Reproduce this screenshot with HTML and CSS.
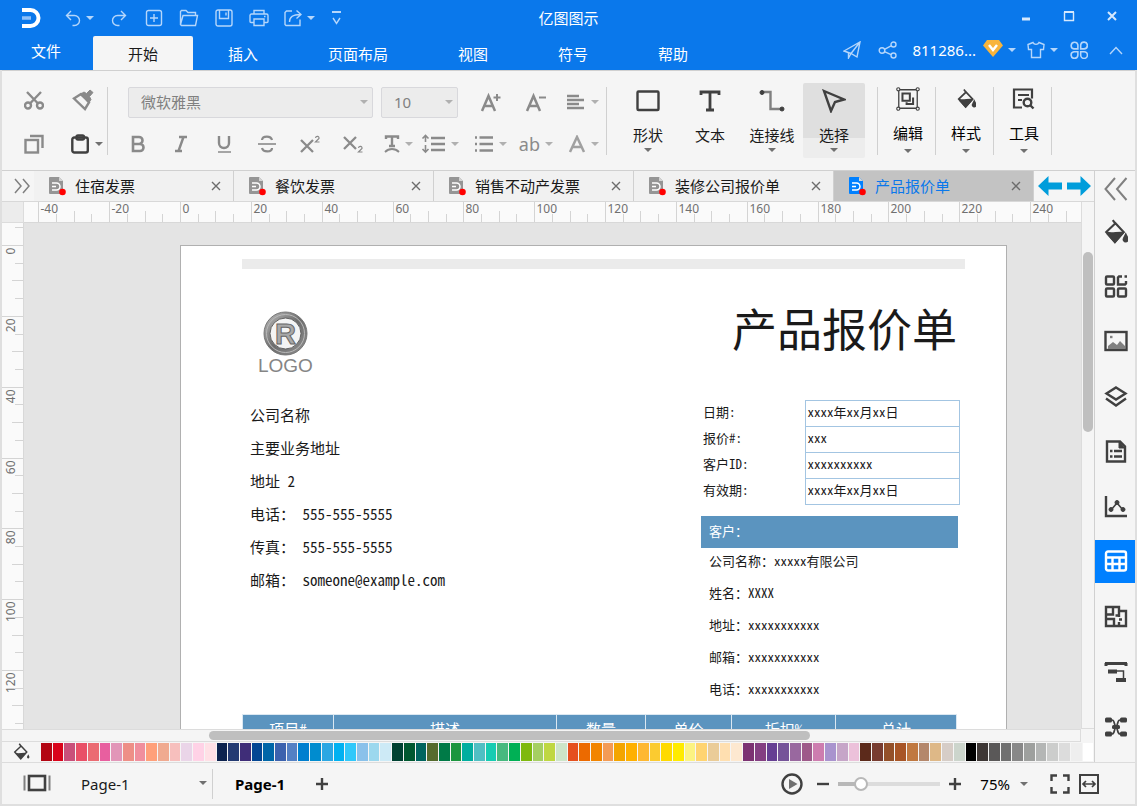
FILE: index.html
```html
<!DOCTYPE html>
<html lang="zh-CN">

	<head>
		<meta charset="UTF-8">
		<meta name="viewport" content="width=device-width, initial-scale=1">
		<title>亿图图示</title>
		<link rel="stylesheet" href="styles.css">
	</head>

	<body>
		<header class="header">
			<div class="titlebar">
				<div class="quick">
					<svg class="brand" width="22" height="22" viewBox="0 0 22 22" fill="none" stroke="#fff" stroke-width="4"><path d="M2 3h8.500a7.800 7.800 0 0 1 0 16H2"/><path d="M2 11h9" stroke="#8fc0f8" stroke-width="3.500"/></svg>
					<button class="undo" aria-label="撤销"><svg width="16" height="18" viewBox="0 0 16 18"><path d="M6 2L1.500 6.500 6 11M1.500 6.500H9.500a5 5 0 0 1 0 10H7.500"/></svg><i class="caret"></i></button>
					<button aria-label="重做"><svg width="16" height="18" viewBox="0 0 16 18"><path d="M10 2l4.500 4.500L10 11M14.500 6.500H6.500a5 5 0 0 0 0 10H8.500"/></svg></button>
					<button aria-label="新建"><svg width="18" height="18" viewBox="0 0 18 18"><rect x="1.500" y="1.500" width="15" height="15" rx="2"/><path d="M9 5v8M5 9h8"/></svg></button>
					<button aria-label="打开"><svg width="20" height="18" viewBox="0 0 20 18"><path d="M1.500 15.500v-13l1-1H7l2 2h7.500v3M1.500 15.500L4 6.500h14.500l-2 10H2.500z"/></svg></button>
					<button aria-label="保存"><svg width="18" height="18" viewBox="0 0 18 18"><rect x="1" y="1" width="16" height="16" rx="2"/><path d="M4.500 1v8.500h9V1M11 3.500v3"/></svg></button>
					<button aria-label="打印"><svg width="20" height="18" viewBox="0 0 20 18"><path d="M5 5V1.500h10V5M5 13.500H2a1 1 0 0 1-1-1V6.500A1.500 1.500 0 0 1 2.500 5h15A1.500 1.500 0 0 1 19 6.500v6a1 1 0 0 1-1 1h-3M5 10h10v6.500H5zM15 7.500h1.500"/></svg></button>
					<button class="export" aria-label="导出"><svg width="18" height="18" viewBox="0 0 18 18"><path d="M8 2H2.500L1 3.500v12l1 1h14v-6M5.500 13c0-5 3-7.500 11-7.500M12.500 1.500l4.500 4-4.500 4"/></svg><i class="caret"></i></button>
					<button aria-label="自定义"><svg width="12" height="16" viewBox="0 0 12 16"><path d="M2 2h9" stroke-width="2"/><path d="M3 8l3.500 5.500L10 8"/></svg></button>
				</div>
				<h1>亿图图示</h1>
				<div class="window-buttons">
					<button aria-label="最小化"><svg width="12" height="12" viewBox="0 0 12 12"><path d="M2 9h8" stroke-width="3"/></svg></button>
					<button aria-label="最大化"><svg width="12" height="12" viewBox="0 0 12 12"><path d="M1 2h10" stroke-width="2"/><path d="M1.500 2v8.500h9V2"/></svg></button>
					<button aria-label="关闭"><svg width="12" height="12" viewBox="0 0 12 12"><path d="M2 2l8 8M10 2l-8 8" stroke-width="2"/></svg></button>
				</div>
			</div>
			<div class="menubar">
				<nav class="menu">
					<a class="file" href="#">文件</a>
					<a class="current" href="#">开始</a>
					<a href="#">插入</a>
					<a href="#">页面布局</a>
					<a href="#">视图</a>
					<a href="#">符号</a>
					<a href="#">帮助</a>
				</nav>
				<div class="account">
					<button aria-label="发送"><svg width="18" height="18" viewBox="0 0 18 18"><path d="M1 10L17 1l-3 15-6-3.500zM8 12.500L17 1M8 12.500L5.500 17v-5.500"/></svg></button>
					<button class="share" aria-label="分享"><svg width="20" height="18" viewBox="0 0 20 18"><circle cx="4" cy="9.500" r="2.800"/><circle cx="15.500" cy="3.500" r="2.500"/><circle cx="15.500" cy="14.500" r="2.500"/><path d="M6.500 8.300l6.500-3.500M6.500 10.700l6.500 3"/></svg></button>
					<button class="user">811286...<svg width="20" height="20" viewBox="0 0 20 20"><path d="M4 0h12l4 5.500L10 17 0 5.500z" fill="#f8b43c" stroke="none"/><path d="M6 5l4 5 4-5" stroke="#fff" stroke-width="2.500"/></svg><i class="caret"></i></button>
					<button class="skin" aria-label="皮肤"><svg width="18" height="18" viewBox="0 0 18 18"><path d="M6 1.500c1 2.500 5 2.500 6 0l5 2-.5 5h-3v8h-9v-8h-3L1 3.500z"/></svg><i class="caret"></i></button>
					<button class="apps" aria-label="应用"><svg width="18" height="18" viewBox="0 0 16 16"><path d="M7 7H3.500A3 3 0 1 1 7 3.500zM9.500 7V3.500A3 3 0 1 1 12.500 7zM7 9.500V12.500A3 3 0 1 1 3.500 9.500zM9.500 9.500h3a3 3 0 1 1-3 3z"/></svg></button>
					<button class="fold" aria-label="收起"><svg width="14" height="9" viewBox="0 0 14 9"><path d="M1 8l6-6.500L13 8"/></svg></button>
				</div>
			</div>
		</header>

		<div class="frame">
			<section class="ribbon">
				<div class="clipboard">
					<button aria-label="剪切"><svg width="20" height="20" viewBox="0 0 20 20"><circle cx="4" cy="15.500" r="3"/><circle cx="16" cy="15.500" r="3"/><path d="M3 2l11 11.500M17 2L6 13.500"/></svg></button>
					<button aria-label="格式刷"><svg width="22" height="22" viewBox="0 0 22 22"><path d="M9 5l-7 4.500L13 20l4-6.500z"/><path d="M8 5.500L12 3l2.500 1.500L18 1l3 2.500-3.500 4 1.500 3-2 3z" fill="#8a8a8a" stroke-width="1"/></svg></button>
					<button aria-label="复制"><svg width="20" height="20" viewBox="0 0 20 20"><rect x="1.500" y="6" width="12.500" height="12.500"/><path d="M6 2h12.500v12"/></svg></button>
					<button class="paste" aria-label="粘贴"><svg width="18" height="20" viewBox="0 0 18 20"><rect x="1.300" y="3.500" width="15.500" height="15" rx="2"/><rect x="5.500" y="1.500" width="7.500" height="4" rx="1.500"/></svg><i class="caret"></i></button>
				</div>
				<i class="rule"></i>
				<div class="font">
					<div class="font-row">
						<div class="combo family"><select aria-label="字体"><option>微软雅黑</option></select><i class="caret"></i></div>
						<div class="combo size"><select aria-label="字号"><option>10</option></select><i class="caret"></i></div>
						<button class="grow" aria-label="增大字号"><svg width="22" height="20" viewBox="0 0 22 20"><path d="M2 19L8.500 4 15 19M4.500 14h8" stroke-width="2.500"/><path d="M17 2v7M13.500 5.500h7" stroke-width="2"/></svg></button>
						<button class="grow" aria-label="减小字号"><svg width="22" height="20" viewBox="0 0 22 20"><path d="M2 19L8.500 4 15 19M4.500 14h8" stroke-width="2.500"/><path d="M14 5.500h7" stroke-width="2"/></svg></button>
						<button class="align drop" aria-label="对齐"><svg width="20" height="16" viewBox="0 0 20 16"><path d="M1 2h12M1 6h17M1 10h12M1 14h17"/></svg><i class="caret"></i></button>
					</div>
					<div class="format-row">
						<button aria-label="加粗"><svg width="18" height="18" viewBox="0 0 18 18"><path d="M3 2h6a3.500 3.500 0 0 1 0 7H3zM3 9h7a3.500 3.500 0 0 1 0 7H3z" stroke-width="2.600"/></svg></button>
						<button aria-label="倾斜"><svg width="18" height="18" viewBox="0 0 18 18"><path d="M6 2h8M2 16h7M10.500 2l-5 14" stroke-width="2.400"/></svg></button>
						<button aria-label="下划线"><svg width="18" height="18" viewBox="0 0 18 18"><path d="M3 1v7a5 5 0 0 0 10 0V1" stroke-width="2.400"/><path d="M2 17h13" stroke-width="1.500"/></svg></button>
						<button aria-label="删除线"><svg width="22" height="18" viewBox="0 0 22 18"><path d="M15 5c-1-4.500-9.500-4.500-10 0M5 13c1 4.500 10 4.500 10 0" stroke-width="2.200"/><path d="M1 9h18" stroke-width="1.600"/></svg></button>
						<button aria-label="上标"><svg width="24" height="20" viewBox="0 0 24 20"><path d="M2 6l12 12M14 6L2 18" stroke-width="2.300"/><path d="M16.500 4c.5-2.500 4-2 3.500.500L16.500 8h4" stroke-width="1.200"/></svg></button>
						<button aria-label="下标"><svg width="24" height="20" viewBox="0 0 24 20"><path d="M2 3l12 12M14 3L2 15" stroke-width="2.300"/><path d="M16.500 14c.5-2.500 4-2 3.500.500L16.500 18h4" stroke-width="1.200"/></svg></button>
						<button class="drop" aria-label="文字样式"><svg width="16" height="20" viewBox="0 0 16 20"><path d="M2 5V2.500h12V5M8 2.500V12M5 12h6" stroke-width="2.400"/><path d="M1 18c4-4 10-4 14 0" stroke-width="1.800"/></svg><i class="caret"></i></button>
						<button class="drop" aria-label="行距"><svg width="25" height="20" viewBox="0 0 25 20"><path d="M10 4h14M10 10h14M10 16h14"/><path d="M4.500 2v6M1.500 4.500l3-3 3 3M4.500 11v6.500M1.500 15l3 3 3-3" stroke-width="1.600"/></svg><i class="caret"></i></button>
						<button class="drop" aria-label="项目符号"><svg width="20" height="18" viewBox="0 0 20 18"><path d="M5.500 2.500H19M5.500 9H19M5.500 15.500H19M1 2.500h2M1 9h2M1 15.500h2"/></svg><i class="caret"></i></button>
						<button class="drop letters">ab<i class="caret"></i></button>
						<button class="drop" aria-label="文字颜色"><svg width="18" height="18" viewBox="0 0 18 18"><path d="M2 17L9 2l7 15M4.500 12h9" stroke="#a0a0a0" stroke-width="2.500"/></svg><i class="caret"></i></button>
					</div>
				</div>
				<i class="rule"></i>
				<div class="tools">
					<button><svg width="24" height="22" viewBox="0 0 24 22"><rect x="1.500" y="1.500" width="21" height="18.500" rx="1" stroke-width="2.400"/></svg>形状<i class="caret"></i></button>
					<button><svg width="22" height="22" viewBox="0 0 22 22"><path d="M2 5V2h18v3M11 2v18M7 20h8" stroke-width="2.800"/></svg>文本</button>
					<button><svg width="26" height="22" viewBox="0 0 26 22"><path d="M3 2h8.500v17H22" stroke="#808080"/><circle cx="3" cy="2.500" r="2" fill="#404040" stroke-width="1"/><circle cx="23" cy="19" r="2" fill="#404040" stroke-width="1"/></svg>连接线<i class="caret"></i></button>
					<button class="pressed"><svg width="24" height="24" viewBox="0 0 24 24"><path d="M2 2l20 8.500-9 2.500-4 9z" stroke-width="2.400"/></svg>选择<i class="caret"></i></button>
				</div>
				<div class="more">
					<button><svg width="26" height="26" viewBox="0 0 26 26"><path d="M3 3h20v20H3z" stroke-width="1.400"/><g fill="#f5f5f5" stroke-width="1.200"><circle cx="2.500" cy="2.500" r="1.700"/><circle cx="23.500" cy="2.500" r="1.700"/><circle cx="2.500" cy="23.500" r="1.700"/><circle cx="23.500" cy="23.500" r="1.700"/></g><path d="M7 7h8v8H7zM18.500 11.500v7h-7v-2" stroke-width="2.200"/></svg>编辑<i class="caret"></i></button>
					<button><svg width="19" height="21" viewBox="0 0 22 24"><use href="#bucket"/></svg>样式<i class="caret"></i></button>
					<button><svg width="24" height="24" viewBox="0 0 24 24"><path d="M10 20.500H2V2.500h18v9M6 8h11M6 13h4" stroke-width="2.200"/><circle cx="15.500" cy="15.500" r="3.800"/><path d="M18.500 18.500l3 3"/></svg>工具<i class="caret"></i></button>
				</div>
			</section>

			<div class="main">
				<div class="editor">
					<div class="tabs">
						<button class="expand" aria-label="展开"><svg width="16" height="16" viewBox="0 0 16 16"><path d="M1 1l6 7-6 7M9 1l6 7-6 7"/></svg></button>
						<div class="tab"><svg class="doc" width="18" height="20" viewBox="0 0 18 20"><use href="#doc"/></svg><span>住宿发票</span><button aria-label="关闭"><svg width="10" height="10" viewBox="0 0 10 10"><use href="#cross"/></svg></button></div>
						<div class="tab"><svg class="doc" width="18" height="20" viewBox="0 0 18 20"><use href="#doc"/></svg><span>餐饮发票</span><button aria-label="关闭"><svg width="10" height="10" viewBox="0 0 10 10"><use href="#cross"/></svg></button></div>
						<div class="tab"><svg class="doc" width="18" height="20" viewBox="0 0 18 20"><use href="#doc"/></svg><span>销售不动产发票</span><button aria-label="关闭"><svg width="10" height="10" viewBox="0 0 10 10"><use href="#cross"/></svg></button></div>
						<div class="tab"><svg class="doc" width="18" height="20" viewBox="0 0 18 20"><use href="#doc"/></svg><span>装修公司报价单</span><button aria-label="关闭"><svg width="10" height="10" viewBox="0 0 10 10"><use href="#cross"/></svg></button></div>
						<div class="tab active"><svg class="doc" width="18" height="20" viewBox="0 0 18 20"><use href="#doc"/></svg><span>产品报价单</span><button aria-label="关闭"><svg width="10" height="10" viewBox="0 0 10 10"><use href="#cross"/></svg></button></div>
						<div class="scroll-tabs">
							<button aria-label="向左"><svg width="24" height="20" viewBox="0 0 24 20"><path d="M0 10L10.500 0v6.500H24v7H10.500V20z"/></svg></button>
							<button aria-label="向右"><svg width="24" height="20" viewBox="0 0 24 20"><path d="M24 10L13.500 0v6.500H0v7h13.500V20z"/></svg></button>
						</div>
					</div>

					<div class="view">
						<div class="corner"></div>
						<svg class="ruler-x" id="rulerX"></svg>
						<svg class="ruler-y" id="rulerY"></svg>
						<div class="canvas">
							<article class="sheet">
								<div class="strip"></div>
								<div class="sheet-head">
									<svg class="logo" width="58" height="68" viewBox="0 0 58 68">
										<defs>
											<linearGradient id="metal" x1="0" y1="0" x2="1" y2="1"><stop offset="0" stop-color="#b4b4b4"/><stop offset=".5" stop-color="#6c6c6c"/><stop offset="1" stop-color="#8c8c8c"/></linearGradient>
										</defs>
										<circle cx="27.500" cy="22.500" r="18.500" fill="#f4f4f4" stroke="url(#metal)" stroke-width="6"/>
										<circle cx="27.500" cy="22.500" r="21.500" fill="none" stroke="#777"/>
										<circle cx="27.500" cy="22.500" r="19" fill="none" stroke="#b9b9b9"/>
										<circle cx="27.500" cy="22.500" r="15.500" fill="none" stroke="#606060"/>
										<text class="mark" x="27.500" y="33" text-anchor="middle">R</text>
										<text class="word" x="0" y="61">LOGO</text>
									</svg>
									<h2>产品报价单</h2>
								</div>
								<div class="sheet-body">
									<ul class="company">
										<li>公司名称</li>
										<li>主要业务地址</li>
										<li>地址 2</li>
										<li>电话： 555-555-5555</li>
										<li>传真： 555-555-5555</li>
										<li>邮箱： someone@example.com</li>
									</ul>
									<div class="quote">
										<table class="meta">
											<tr><th>日期:</th><td>xxxx年xx月xx日</td></tr>
											<tr><th>报价#:</th><td>xxx</td></tr>
											<tr><th>客户ID:</th><td>xxxxxxxxxx</td></tr>
											<tr><th>有效期:</th><td>xxxx年xx月xx日</td></tr>
										</table>
										<h3>客户：</h3>
										<ul class="client">
											<li>公司名称：xxxxx有限公司</li>
											<li>姓名：XXXX</li>
											<li>地址：xxxxxxxxxxx</li>
											<li>邮箱：xxxxxxxxxxx</li>
											<li>电话：xxxxxxxxxxx</li>
										</ul>
									</div>
								</div>
								<table class="items">
									<colgroup><col class="c-id"><col><col class="c-num"><col class="c-price"><col class="c-off"><col class="c-sum"></colgroup>
									<tr><th>项目#</th><th>描述</th><th>数量</th><th>单价</th><th>折扣%</th><th>总计</th></tr>
								</table>
							</article>
						</div>
						<div class="vscroll"><div class="thumb"></div></div>
					</div>
					<div class="hscroll"><div class="thumb"></div></div>
					<div class="palette">
						<svg width="17" height="18" viewBox="0 0 22 24"><use href="#bucket"/></svg>
						<div class="swatches" id="swatches"></div>
					</div>
				</div>

				<aside class="side">
					<button class="collapse" aria-label="收起面板"><svg width="24" height="24" viewBox="0 0 24 24"><path d="M11 1L1.500 12 11 23M22.500 1L13 12l9.500 11" stroke="#808080" stroke-width="2"/></svg></button>
					<button aria-label="填充"><svg width="24" height="26" viewBox="0 0 22 24"><use href="#bucket"/></svg></button>
					<button aria-label="符号库"><svg width="24" height="24" viewBox="0 0 24 24"><rect x="2" y="1.500" width="8" height="8" rx="1"/><rect x="2" y="13.500" width="8" height="8" rx="1"/><rect x="14" y="13.500" width="8" height="8" rx="1"/><path d="M18 1.500H15l-1 1v7h7l1-1V6M20.500 1.500H23"/></svg></button>
					<button aria-label="图片"><svg width="24" height="24" viewBox="0 0 24 24"><rect x="1.500" y="2" width="21" height="18"/><path d="M4 19v-3l5-4 4 3 3-4 5 5v3z" fill="#808080" stroke="none"/><path d="M6 7h2.500" stroke="#808080"/></svg></button>
					<button aria-label="图层"><svg width="24" height="24" viewBox="0 0 24 24"><path d="M12 2.500l9.500 6-9.500 6-9.500-6zM2 13.500l10 7 10-7"/></svg></button>
					<button aria-label="备注"><svg width="22" height="24" viewBox="0 0 22 24"><path d="M2 1.500h13l5 5v15H2z"/><path d="M14 1v7h6" fill="#404040" stroke-width="1"/><path d="M5 11h2.500M9 11h8M5 16.500h2.500M9 16.500h8"/></svg></button>
					<button aria-label="图表"><svg width="24" height="24" viewBox="0 0 24 24"><path d="M2 1v20h21"/><path d="M7 15l6-7 6 7" stroke-width="1.600"/><g fill="#404040" stroke-width="1"><circle cx="7" cy="14.500" r="2"/><circle cx="13" cy="7.500" r="2"/><circle cx="19" cy="14.500" r="2"/></g></svg></button>
					<button class="on" aria-label="表格"><svg width="24" height="24" viewBox="0 0 24 24"><rect x="2" y="1.500" width="20" height="19" rx="2"/><path d="M2 7.500h20M2 14h20M8.500 7.500V21M15.500 7.500V21"/></svg></button>
					<button aria-label="平面图"><svg width="24" height="24" viewBox="0 0 24 24"><path d="M2 2h13v4h7v15H2zM2 9.500h7V5.500M9 2v4M2 14h8v7M15 6v6M15 17v4M11.500 10.500H15M15 14.500h3"/></svg></button>
					<button aria-label="甘特图"><svg width="24" height="24" viewBox="0 0 24 24"><path d="M1 3.500h22M2 3v3M22 3v3" stroke-width="3"/><path d="M4 11.500h9M12 20h10" stroke-width="4"/><path d="M13 11h6.500v8" stroke-width="1.500"/></svg></button>
					<button aria-label="思维导图"><svg width="24" height="22" viewBox="0 0 24 22"><path d="M5 4h3c3 0 2 6 4 7 2-1 1-7 4-7h3M5 18h3c3 0 2-6 4-7 2 1 1 7 4 7h3" stroke-width="1.700"/><g fill="#404040" stroke="none"><rect x="1" y="1.500" width="7" height="5" rx="1.500"/><rect x="16" y="1.500" width="7" height="5" rx="1.500"/><rect x="1" y="15.500" width="7" height="5" rx="1.500"/><rect x="16" y="15.500" width="7" height="5" rx="1.500"/><rect x="8" y="9" width="8" height="4" rx="1.500"/></g></svg></button>
				</aside>
			</div>

			<footer class="status">
				<button class="pages" aria-label="页面"><svg width="28" height="20" viewBox="0 0 28 20"><rect x="6" y="2" width="16" height="14" stroke-width="2.600"/><path d="M1.500 1.500v15M26.500 1.500v15" stroke="#808080" stroke-width="2"/></svg></button>
				<div class="combo page"><select aria-label="当前页"><option>Page-1</option></select><i class="caret"></i></div>
				<i class="rule"></i>
				<a class="page-tab" href="#">Page-1</a>
				<button aria-label="添加页面"><svg width="14" height="14" viewBox="0 0 14 14"><path d="M7 1v12M1 7h12"/></svg></button>
				<div class="zoom">
					<button aria-label="放映"><svg width="22" height="22" viewBox="0 0 22 22"><circle cx="11" cy="11" r="9.500"/><path d="M8 6l8.500 5L8 16z" fill="#707070" stroke="none"/></svg></button>
					<button class="minus" aria-label="缩小"><svg width="14" height="14" viewBox="0 0 14 14"><path d="M1 7h12"/></svg></button>
					<input type="range" min="0" max="100" value="18" aria-label="缩放">
					<button class="plus" aria-label="放大"><svg width="14" height="14" viewBox="0 0 14 14"><path d="M7 1v12M1 7h12"/></svg></button>
					<button class="percent">75%<i class="caret"></i></button>
					<button class="full" aria-label="全屏"><svg width="20" height="20" viewBox="0 0 20 20"><path d="M1.500 7V1.500H7M13 1.500h5.500V7M18.500 13v5.500H13M7 18.500H1.500V13"/></svg></button>
					<button aria-label="适合宽度"><svg width="20" height="20" viewBox="0 0 20 20"><rect x="1" y="1" width="18" height="18" stroke-width="2"/><path d="M5 10h10M7 7l-3 3 3 3M13 7l3 3-3 3" stroke-width="1.700"/></svg></button>
				</div>
			</footer>
		</div>

		<svg class="defs" width="0" height="0">
			<symbol id="bucket" viewBox="0 0 22 24"><path d="M8 1l3 4M10.500 4L18 12l-8 9-8-9z" fill="none" stroke="#404040" stroke-width="2"/><path d="M3 13c4 1.500 9-.5 14 0l-7 8z" fill="#404040"/><path d="M20 15l1.500 3a1.700 1.700 0 1 1-3 0z" fill="#404040"/></symbol>
			<symbol id="doc" viewBox="0 0 18 20"><path d="M2 1h9l4 4v13H2a1 1 0 0 1-1-1V2a1 1 0 0 1 1-1z" fill="currentColor"/><path d="M11 1v4h4z" fill="#d4d4d4"/><path d="M4 7h4.500a3 3 0 0 1 0 7H4M4 10.500h4" fill="none" stroke="#fff" stroke-width="1.500"/><circle cx="14.500" cy="16" r="3.300" fill="#f00"/></symbol>
			<symbol id="cross" viewBox="0 0 10 10"><path d="M1 1l8 8M9 1L1 9" fill="none" stroke="#6c6c6c" stroke-width="1.400"/></symbol>
		</svg>
		<script src="script.js"></script>
	</body>

</html>
```

FILE: styles.css
```css
* {
	margin: 0;
	padding: 0;
	box-sizing: border-box;
}

body {
	height: 100vh;
	display: flex;
	flex-direction: column;
	font: 15px/20px "Noto Sans", "Noto Sans CJK SC", sans-serif;
	color: #1a1a1a;
	background: #f5f5f5;
	overflow: hidden;
}

ul {
	list-style: none;
}

a {
	color: inherit;
	text-decoration: none;
}

button {
	display: flex;
	align-items: center;
	justify-content: center;
	flex: none;
	border: 0;
	background: none;
	font: inherit;
	color: inherit;
}

svg {
	display: block;
	flex: none;
}

button svg {
	fill: none;
	stroke: #404040;
	stroke-width: 2.4;
}

.defs {
	position: absolute;
}

.caret {
	flex: none;
	border: 4px solid transparent;
	border-top-color: #707070;
	border-bottom: 0;
}

.rule {
	flex: none;
	width: 1px;
	background: #d0d0d0;
}

/* header */
.header {
	flex: none;
	background: #0a78eb;
	color: #fff;
}

.header button svg {
	stroke: #b5d6fb;
	stroke-width: 1.4;
}

.header .caret {
	border-top-color: #b5d6fb;
}

.titlebar {
	height: 36px;
	display: grid;
	grid-template-columns: 1fr auto 1fr;
	align-items: center;
}

.titlebar h1 {
	font-size: 15px;
	font-weight: 400;
}

.quick {
	display: flex;
	align-items: center;
	padding-left: 20px;
}

.quick button {
	width: 35px;
	height: 34px;
}

.quick .undo,
.quick .export {
	width: 42px;
	gap: 5px;
}

.quick .undo {
	margin: 0 1px 0 16px;
}

.quick .export {
	padding-left: 4px;
}

.window-buttons {
	display: flex;
	justify-content: flex-end;
	padding: 0 4px 4px 0;
}

.window-buttons button {
	width: 43px;
	height: 28px;
}

.window-buttons button svg {
	stroke: #d5e8fd;
}

.menubar {
	height: 34px;
	display: flex;
	justify-content: space-between;
}

.menu {
	display: flex;
}

.menu a {
	padding: 0 35px;
	line-height: 36px;
}

.menu .file {
	padding: 0 32px 0 31px;
	line-height: 30px;
}

.menu .current {
	background: #f5f5f5;
	color: #1a1a1a;
	border-radius: 2px 2px 0 0;
}

.account {
	display: flex;
	align-items: center;
	padding: 0 14px 6px 0;
}

.account .share {
	margin: 0 14px 0 17px;
}

.account .user {
	gap: 7px;
	margin-right: 11px;
}

.account .user .caret {
	margin-left: -2px;
}

.account .skin {
	gap: 5px;
}

.account .apps {
	margin: 0 21px 0 12px;
}

/* window frame */
.frame {
	flex: 1;
	min-height: 0;
	display: flex;
	flex-direction: column;
	border: 2px solid #dfdfdf;
	border-top: 0;
}

/* ribbon */
.ribbon {
	flex: none;
	height: 101px;
	display: flex;
	align-items: flex-start;
	border-top: 1px solid #d0d0d0;
	border-bottom: 1px solid #d0d0d0;
	padding: 7px 8px 0;
}

.ribbon > .rule {
	height: 68px;
	margin-top: 9px;
}

.clipboard {
	display: grid;
	grid-template-columns: 48px 49px;
	grid-auto-rows: 44px;
}

.clipboard button svg {
	stroke: #8a8a8a;
}

.clipboard .paste {
	gap: 6px;
	padding-left: 8px;
}

.clipboard .paste svg {
	stroke: #404040;
}

.font {
	padding: 0 7px 0 9px;
	color: #8a8a8a;
}

.font button svg {
	stroke: #8a8a8a;
}

.font .caret {
	border-top-color: #b0b0b0;
}

.font-row {
	height: 48px;
	display: flex;
	align-items: center;
	padding-left: 11px;
}

.font-row .grow {
	width: 45px;
}

.font-row .align {
	width: 41px;
}

.format-row {
	height: 36px;
	display: grid;
	grid-template-columns: repeat(6, 43px) 38px 46px 48px 46px 46px;
}

.font .drop {
	justify-content: flex-end;
	gap: 5px;
}

.font .letters {
	font-size: 18px;
}

.combo {
	position: relative;
}

.combo select {
	width: 100%;
	height: 31px;
	appearance: none;
	border: 1px solid #d8d8dc;
	border-radius: 2px;
	background: #ececec;
	color: #808080;
	padding-left: 12px;
	font: inherit;
}

.combo .caret {
	position: absolute;
	right: 5px;
	top: 13px;
}

.combo.family {
	width: 245px;
	margin-right: 8px;
}

.combo.size {
	width: 77px;
	margin-right: 10px;
}

.tools {
	display: flex;
	padding: 5px 12px 0 10px;
}

.tools button,
.more button {
	flex-direction: column;
	justify-content: flex-start;
}

.tools button {
	width: 62px;
	height: 75px;
	padding-top: 6px;
	border-radius: 2px;
}

.tools button svg,
.more button svg {
	height: 24px;
	margin-bottom: 12px;
}

.tools .caret {
	margin-top: 3px;
}

.more .caret {
	margin-top: 6px;
}

.tools .pressed {
	background: linear-gradient(#dfdfdf 55px, #ededed 55px);
}

.more {
	display: flex;
	margin-top: 9px;
	border-left: 1px solid #d0d0d0;
}

.more button {
	width: 58px;
	height: 68px;
	padding: 0 0 0 3px;
	color: #000;
	border-right: 1px solid #d0d0d0;
}

/* document tabs */
.main {
	flex: 1;
	min-height: 0;
	display: flex;
}

.editor {
	flex: 1;
	min-width: 0;
	display: flex;
	flex-direction: column;
}

.tabs {
	flex: none;
	height: 31px;
	display: flex;
	background: #f5f5f5;
	border-bottom: 1px solid #d8d8d8;
}

.expand {
	width: 32px;
	padding-left: 8px;
}

.expand svg {
	stroke: #808080;
	stroke-width: 1.5;
}

.tab {
	width: 200px;
	display: flex;
	align-items: center;
	gap: 9px;
	padding: 0 12px 0 14px;
	background: #f1f1f1;
	border-right: 1px solid #d0d0d0;
}

.tab span {
	flex: 1;
}

.tab .doc {
	color: #959595;
}

.tab.active {
	background: #c3c3c3;
	color: #0a78eb;
}

.tab.active .doc {
	color: #0080ff;
}

.scroll-tabs {
	flex: 1;
	display: flex;
	justify-content: center;
	gap: 5px;
}

.scroll-tabs svg {
	fill: #009ddb;
	stroke: none;
}

/* rulers and canvas */
.view {
	flex: 1;
	min-height: 0;
	display: grid;
	grid-template: 21px 1fr / 22px 1fr 13px;
}

.corner {
	background: #ececec;
	border: 1px solid #dcdcdc;
	border-width: 0 1px 1px 0;
}

.ruler-x,
.ruler-y {
	width: 100%;
	height: 100%;
	min-height: 0;
	overflow: visible;
	background: #fafafa;
	font-size: 12px;
	line-height: 14px;
	fill: #707070;
	stroke: none;
}

.ruler-x {
	border-bottom: 1px solid #d8d8d8;
}

.ruler-y {
	grid-area: 2 / 1;
	border-right: 1px solid #d8d8d8;
}

.ruler-x line,
.ruler-y line {
	stroke: #d4d4d4;
}

.canvas {
	grid-area: 2 / 2;
	min-height: 0;
	overflow: hidden;
	background: #e4e4e4;
	padding: 22px 0 0 156px;
}

.vscroll {
	grid-area: 1 / 3 / 3 / 4;
	border: 1px solid #dcdcdc;
	border-width: 0 0 1px 1px;
	padding: 50px 1px 0;
}

.vscroll .thumb {
	height: 180px;
	border-radius: 5px;
	background: #bfbfbf;
}

.hscroll {
	flex: none;
	height: 13px;
	margin-right: 13px;
	border: 1px solid #dcdcdc;
	border-left: 0;
	padding: 1px 0 0 207px;
}

.hscroll .thumb {
	width: 69%;
	height: 9px;
	border-radius: 5px;
	background: #bfbfbf;
}

/* the quotation sheet */
.sheet {
	width: 827px;
	height: 1169px;
	padding: 13px 41px 0 61px;
	background: #fff;
	border: 1px solid #b0b0b0;
	font-family: "Noto Sans CJK SC", sans-serif;
	font-feature-settings: "hwid";
}

.strip {
	height: 10px;
	background: #ebebeb;
}

.sheet-head {
	height: 129px;
	display: flex;
	justify-content: space-between;
	padding: 29px 8px 0 16px;
}

.sheet-head h2 {
	font-size: 45px;
	font-weight: 400;
	line-height: 60px;
}

.logo {
	margin-top: 13px;
	font-family: "Liberation Sans", sans-serif;
	font-feature-settings: normal;
}

.logo .mark {
	font-size: 29px;
	font-weight: 700;
	fill: #a8a8a8;
	stroke: #666;
}

.logo .word {
	font-size: 19px;
	fill: #858585;
}

.sheet-body {
	display: flex;
	justify-content: space-between;
	padding: 0 5px 0 8px;
}

.company {
	line-height: 33px;
}

.quote {
	width: 259px;
	padding-top: 2px;
	font-size: 13px;
}

.meta {
	width: 100%;
	border-collapse: collapse;
}

.meta th {
	width: 104px;
	padding: 0 0 4px 2px;
	font-weight: 400;
	text-align: left;
}

.meta td {
	height: 26px;
	padding: 0 2px 4px;
	border: 1px solid #a3c5e2;
}

.quote h3 {
	margin: 11px 2px 0 0;
	padding: 0 0 2px 8px;
	background: #5b94bf;
	color: #fff;
	font-size: 13px;
	font-weight: 400;
	line-height: 30px;
}

.client {
	padding-left: 8px;
}

.client li {
	padding-bottom: 6px;
	line-height: 26px;
}

.items {
	width: 715px;
	margin-top: 6px;
	table-layout: fixed;
	border-collapse: collapse;
	background: #5b94bf;
	color: #fff;
}

.items th {
	height: 32px;
	padding-bottom: 4px;
	border: 1px solid #dbe8f2;
	font-weight: 400;
}

.c-id {
	width: 91px;
}

.c-num {
	width: 89px;
}

.c-price {
	width: 86px;
}

.c-off {
	width: 104px;
}

.c-sum {
	width: 121px;
}

/* colour palette */
.palette {
	flex: none;
	height: 20px;
	display: flex;
	align-items: center;
	gap: 11px;
	padding-left: 11px;
}

.swatches {
	flex: 1;
	height: 18px;
	display: flex;
}

.swatches i {
	flex: 1;
	border-right: 1px solid #f5f5f5;
}

/* right side panel */
.side {
	width: 41px;
	flex: none;
	display: flex;
	flex-direction: column;
	gap: 12px;
	border-left: 1px solid #d0d0d0;
}

.side button {
	height: 43px;
	padding-left: 1px;
}

.side .collapse {
	height: 27px;
	padding-top: 9px;
}

.side .on {
	background: #0080ff;
}

.side .on svg {
	stroke: #fff;
}

/* status bar */
.status {
	flex: none;
	height: 42px;
	display: flex;
	align-items: center;
	border-top: 1px solid #dcdcdc;
	padding: 0 36px 0 21px;
	color: #000;
}

.status .rule {
	height: 30px;
}

.combo.page {
	width: 144px;
	margin: 0 5px 0 12px;
}

.page select {
	border: 0;
	padding-left: 18px;
	background: none;
	color: #1a1a1a;
}

.page .caret {
	right: 0;
}

.page-tab {
	margin: 0 30px 0 22px;
	font-weight: 700;
}

.zoom {
	flex: 1;
	display: flex;
	align-items: center;
	justify-content: flex-end;
}

.zoom .minus {
	margin: 0 8px 0 13px;
}

.zoom .plus {
	margin: 0 18px 0 8px;
}

.zoom .percent {
	gap: 10px;
}

.zoom .full {
	margin: 0 9px 0 22px;
}

.zoom input {
	width: 102px;
	height: 14px;
	appearance: none;
	background: linear-gradient(90deg, #b8b8b8 20%, #dcdcdc 20%) center / 100% 4px no-repeat;
}

.zoom input::-webkit-slider-thumb {
	appearance: none;
	width: 14px;
	height: 14px;
	border: 2px solid #b8b8b8;
	border-radius: 50%;
	background: #fff;
}
```

FILE: script.js
```js
var NS = 'http://www.w3.org/2000/svg';
var STEP = 17.71; /* 5 mm at 75% */

function add(svg, tag, attrs, text) {
	var el = document.createElementNS(NS, tag);
	for (var k in attrs) {
		el.setAttribute(k, attrs[k]);
	}
	if (text !== undefined) {
		el.textContent = text;
	}
	svg.appendChild(el);
}

function drawRuler(svg, zero, vertical) {
	var box = svg.getBoundingClientRect();
	var size = vertical ? box.height : box.width;
	svg.textContent = '';
	for (var i = -8; i < 400; i++) {
		var pos = Math.floor(zero + i * STEP) + 0.5;
		if (pos < 0) continue;
		if (pos > size) break;
		var major = i % 4 === 0;
		var len = major ? 21 : (i % 2 === 0 ? 11 : 8);
		var label = major && pos + 28 < size; /* no half labels at the end */
		if (vertical) {
			add(svg, 'line', {x1: 21 - len, x2: 21, y1: pos, y2: pos});
			if (label) {
				add(svg, 'text', {transform: 'translate(13,' + (pos + 2) + ') rotate(-90)', 'text-anchor': 'end'}, i * 5);
			}
		} else {
			add(svg, 'line', {x1: pos, x2: pos, y1: Math.max(0, 20 - len), y2: 20});
			if (label) {
				add(svg, 'text', {x: pos + 2, y: 11}, i * 5);
			}
		}
	}
}

function drawRulers() {
	drawRuler(document.getElementById('rulerX'), 156.5, false);
	drawRuler(document.getElementById('rulerY'), 22.5, true);
}

drawRulers();
window.onresize = drawRulers;

var colors = ('b30613 d9041b c9507a e95067 eb6b72 e85f9f e296b8 ee8f87 f08f9d ffa07a f0aa90 f7bfbd ead5e8 ffd2e6 ffe0e6 ' +
	'0d234f 233a72 3f2d78 034693 0066a8 3c62ae 5480c4 007fcf 008ccf 2ba7e3 00b1f1 30c8fa 8ac1ea 9cd8ee cdeaf6 ' +
	'004232 005830 00655f 566b2e 007a47 1c963f 00ae9f 50bfc3 16ccb2 47b97f 00b055 7fb90e a5cf62 bfd742 cde5c9 ' +
	'e5501f ec6a00 f28500 f39b55 f3a500 ffb000 feb832 fbcb30 ffda00 ffeb00 fcf382 ffd471 eacc98 ffdfb0 fde8d0 ' +
	'7c3272 843f82 663f93 755399 99689f 9e5a8a cd7daf a993ce c6a5c8 ecc1da ' +
	'5c2a1b 783c30 945029 a85526 c07840 b4876b deb887 d6cdc7 ccd5cc ' +
	'000000 3e3735 5a5858 707070 888888 9ea09e b4b6b5 cccdcc dcdcdc eeeeee ffffff').split(' ');
var swatches = document.getElementById('swatches');
for (var i = 0; i < colors.length; i++) {
	var sw = document.createElement('i');
	sw.style.background = '#' + colors[i];
	swatches.appendChild(sw);
}
```
